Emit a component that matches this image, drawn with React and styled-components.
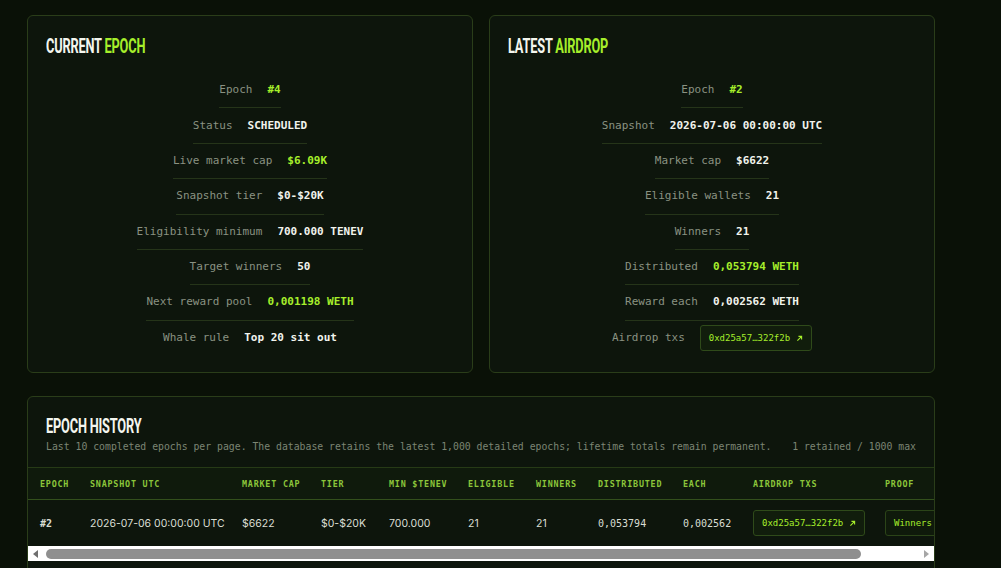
import styled, { createGlobalStyle } from 'styled-components';

const GlobalStyle = createGlobalStyle`
  html, body {
    margin: 0;
    padding: 0;
    background: #0a1107;
  }
  body {
    font-family: "DejaVu Sans Mono", "Liberation Mono", monospace;
    color: #e9ece4;
  }
`;

const mono = `"DejaVu Sans Mono", "Liberation Mono", monospace`;
const sans = `Inter, "Noto Sans", sans-serif`;
const display = `Roboto, "Liberation Sans", sans-serif`;

const Page = styled.main`
  width: 908px;
  padding: 15px 0 0 27px;
  display: flex;
  flex-direction: column;
  gap: 23px;
`;

const TopGrid = styled.div`
  display: grid;
  grid-template-columns: 1fr 1fr;
  gap: 16px;
`;

const Card = styled.section`
  background: #0d150c;
  border: 1px solid #2a3d19;
  border-radius: 6px;
  padding: ${(p) => p.$pad || '18px 18px 15px'};
  overflow: hidden;
`;

const Title = styled.h2`
  margin: 0;
  height: 24px;
  font-family: ${display};
  font-weight: 700;
  font-size: 20px;
  line-height: 24px;
  letter-spacing: -0.3px;
  color: #f4f6ef;
  text-transform: uppercase;
  white-space: nowrap;
  transform: scale(0.64, 1.04);
  transform-origin: left center;

  span {
    color: #a6ee2b;
  }
`;

const StatList = styled.div`
  display: flex;
  flex-direction: column;
  align-items: center;
  margin-top: 15px;
`;

const StatRow = styled.div`
  display: flex;
  align-items: center;
  gap: 15px;
  padding: ${(p) => (p.$chip ? '4.7px 0' : '10.2px 0')};
  border-bottom: 1px solid ${(p) => (p.$last ? 'transparent' : '#253419')};
  font-size: 11px;
  line-height: 14px;
`;

const Label = styled.span`
  color: #8a9282;
`;

const Value = styled.span`
  font-weight: 700;
  color: ${(p) => (p.$accent ? '#a6ee2b' : '#f1f3ec')};
`;

const Chip = styled.a`
  display: inline-flex;
  align-items: center;
  gap: 6px;
  padding: 6px 8px;
  border: 1px solid #2f4a1a;
  background: #111d0c;
  border-radius: 3px;
  color: #a6ee2b;
  font-family: ${mono};
  font-size: 9px;
  line-height: 12px;
  text-decoration: none;
  white-space: nowrap;
`;

const HistoryHead = styled.div`
  display: flex;
  flex-direction: column;
  gap: 3px;
  padding: 17px 18px 14px;
`;

const SubLine = styled.div`
  display: flex;
  justify-content: space-between;
  font-size: 9.8px;
  line-height: 12px;
  color: #7c8574;
  white-space: nowrap;
`;

const Scroller = styled.div`
  overflow: hidden;
`;

const ScrollBar = styled.div`
  display: flex;
  align-items: center;
  height: 15px;
  background: #ffffff;
`;

const ScrollArrow = styled.span`
  flex: 0 0 15px;
  display: flex;
  align-items: center;
  justify-content: center;

  &::before {
    content: '';
    width: 0;
    height: 0;
    border-top: 4px solid transparent;
    border-bottom: 4px solid transparent;
    ${(p) =>
      p.$dir === 'left'
        ? 'border-right: 5px solid #6f6f6f;'
        : 'border-left: 5px solid #a6a6a6;'}
  }
`;

const ScrollTrack = styled.div`
  flex: 1;
  padding: 0 3px;
`;

const ScrollThumb = styled.div`
  height: 10px;
  border-radius: 5px;
  background: #8f8f8f;
`;

const Table = styled.table`
  width: 980px;
  table-layout: fixed;
  border-collapse: collapse;
  white-space: nowrap;
`;

const Th = styled.th`
  box-sizing: border-box;
  text-align: left;
  padding: 0 12px;
  height: 32px;
  font-family: ${mono};
  font-size: 8.4px;
  font-weight: 700;
  letter-spacing: 0.8px;
  color: #8cc63a;
  background: #0f1a0c;
  border-top: 1px solid #263a16;
  border-bottom: 1px solid #33501c;
  width: ${(p) => p.$w}px;
`;

const Td = styled.td`
  padding: 0 12px;
  height: 46px;
  overflow: hidden;
  font-family: ${(p) => (p.$mono ? mono : sans)};
  font-size: ${(p) => (p.$mono ? '10px' : '10.5px')};
  font-weight: ${(p) => (p.$bold ? 700 : 400)};
  color: #d9ddd3;
`;

const Button = styled.span`
  display: inline-flex;
  padding: 6px 8px;
  border: 1px solid #2b4418;
  background: #0f1a0b;
  border-radius: 3px;
  color: #a6ee2b;
  font-family: ${mono};
  font-size: 9px;
  line-height: 12px;
`;

const Arrow = () => (
  <svg width="7" height="7" viewBox="0 0 10 10" fill="none" stroke="currentColor" strokeWidth="1.6">
    <path d="M2 8 L8 2 M3.5 2 H8 V6.5" />
  </svg>
);

const current = [
  ['Epoch', '#4', true],
  ['Status', 'SCHEDULED'],
  ['Live market cap', '$6.09K', true],
  ['Snapshot tier', '$0-$20K'],
  ['Eligibility minimum', '700.000 TENEV'],
  ['Target winners', '50'],
  ['Next reward pool', '0,001198 WETH', true],
  ['Whale rule', 'Top 20 sit out'],
];

const latest = [
  ['Epoch', '#2', true],
  ['Snapshot', '2026-07-06 00:00:00 UTC'],
  ['Market cap', '$6622'],
  ['Eligible wallets', '21'],
  ['Winners', '21'],
  ['Distributed', '0,053794 WETH', true],
  ['Reward each', '0,002562 WETH'],
];

const columns = [
  ['EPOCH', 50],
  ['SNAPSHOT UTC', 152],
  ['MARKET CAP', 79],
  ['TIER', 68],
  ['MIN $TENEV', 79],
  ['ELIGIBLE', 68],
  ['WINNERS', 62],
  ['DISTRIBUTED', 85],
  ['EACH', 70],
  ['AIRDROP TXS', 132],
  ['PROOF', 135],
];

const visibleShare = 0.937;

export default function App() {
  return (
    <>
      <GlobalStyle />
      <Page>
        <TopGrid>
          <Card>
            <Title>
              Current <span>Epoch</span>
            </Title>
            <StatList>
              {current.map(([label, value, accent], i) => (
                <StatRow key={label} $last={i === current.length - 1}>
                  <Label>{label}</Label>
                  <Value $accent={accent}>{value}</Value>
                </StatRow>
              ))}
            </StatList>
          </Card>
          <Card>
            <Title>
              Latest <span>Airdrop</span>
            </Title>
            <StatList>
              {latest.map(([label, value, accent]) => (
                <StatRow key={label}>
                  <Label>{label}</Label>
                  <Value $accent={accent}>{value}</Value>
                </StatRow>
              ))}
              <StatRow $last $chip>
                <Label>Airdrop txs</Label>
                <Chip href="#">
                  0xd25a57…322f2b <Arrow />
                </Chip>
              </StatRow>
            </StatList>
          </Card>
        </TopGrid>

        <Card $pad="0">
          <HistoryHead>
            <Title>Epoch History</Title>
            <SubLine>
              <span>
                Last 10 completed epochs per page. The database retains the latest 1,000 detailed epochs; lifetime totals remain permanent.
              </span>
              <span>1 retained / 1000 max</span>
            </SubLine>
          </HistoryHead>
          <Scroller>
            <Table>
              <thead>
                <tr>
                  {columns.map(([name, w]) => (
                    <Th key={name} $w={w}>
                      {name}
                    </Th>
                  ))}
                </tr>
              </thead>
              <tbody>
                <tr>
                  <Td $mono $bold>#2</Td>
                  <Td>2026-07-06 00:00:00 UTC</Td>
                  <Td>$6622</Td>
                  <Td>$0-$20K</Td>
                  <Td>700.000</Td>
                  <Td>21</Td>
                  <Td>21</Td>
                  <Td $mono>0,053794</Td>
                  <Td $mono>0,002562</Td>
                  <Td>
                    <Chip href="#">
                      0xd25a57…322f2b <Arrow />
                    </Chip>
                  </Td>
                  <Td>
                    <Button>Winners</Button>
                  </Td>
                </tr>
              </tbody>
            </Table>
          </Scroller>
          <ScrollBar>
            <ScrollArrow $dir="left" />
            <ScrollTrack>
              <ScrollThumb style={{ width: `${visibleShare * 100}%` }} />
            </ScrollTrack>
            <ScrollArrow $dir="right" />
          </ScrollBar>
          <div style={{ height: 40 }} />
        </Card>
      </Page>
    </>
  );
}
